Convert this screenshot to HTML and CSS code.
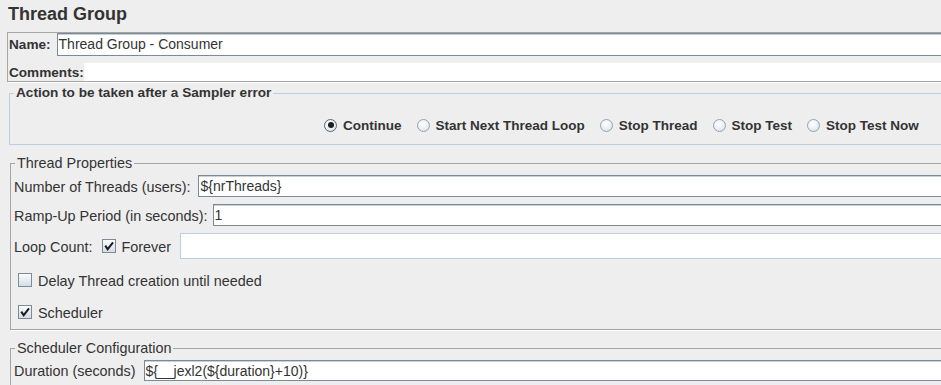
FILE: index.html
```html
<!DOCTYPE html>
<html lang="en">
<head>
<meta charset="utf-8">
<title>Thread Group</title>
<link rel="stylesheet" href="styles.css">
</head>
<body>
<h1 class="title">Thread Group</h1>

<div class="namebox">
  <div class="row name-row">
    <span class="lbl-b">Name:</span>
    <div class="field h23">Thread Group - Consumer</div>
  </div>
  <div class="row comments-row">
    <span class="lbl-b">Comments:</span>
    <div class="area"></div>
  </div>
</div>

<fieldset class="group action">
  <legend class="legend-b">Action to be taken after a Sampler error</legend>
  <div class="radios">
    <span class="radio-item"><span class="rb on"><span class="dot"></span></span><span class="rlabel">Continue</span></span>
    <span class="radio-item"><span class="rb"></span><span class="rlabel">Start Next Thread Loop</span></span>
    <span class="radio-item"><span class="rb"></span><span class="rlabel">Stop Thread</span></span>
    <span class="radio-item"><span class="rb"></span><span class="rlabel">Stop Test</span></span>
    <span class="radio-item"><span class="rb"></span><span class="rlabel">Stop Test Now</span></span>
  </div>
</fieldset>

<fieldset class="group etched props">
  <legend>Thread Properties</legend>
  <div class="gbody">
    <div class="prow h22">
      <span class="lbl wide">Number of Threads (users):</span>
      <div class="field fill">${nrThreads}</div>
    </div>
    <div class="prow h22">
      <span class="lbl">Ramp-Up Period (in seconds):</span>
      <div class="field fill">1</div>
    </div>
    <div class="prow h26">
      <span class="lbl">Loop Count:</span>
      <span class="cb cb-forever"><svg viewBox="0 0 12 12" width="12" height="12"><path d="M2.8 6.4 L4.7 9.2 L9.4 3.2" fill="none" stroke="#1e1e1e" stroke-width="2" stroke-linecap="square"/></svg></span>
      <span class="lbl forever">Forever</span>
      <div class="field fill disabled"></div>
    </div>
    <div class="prow h28">
      <span class="cb cb-indent"></span>
      <span class="lbl">Delay Thread creation until needed</span>
    </div>
    <div class="prow h22">
      <span class="cb cb-indent"><svg viewBox="0 0 12 12" width="12" height="12"><path d="M2.8 6.4 L4.7 9.2 L9.4 3.2" fill="none" stroke="#1e1e1e" stroke-width="2" stroke-linecap="square"/></svg></span>
      <span class="lbl">Scheduler</span>
    </div>
  </div>
</fieldset>

<fieldset class="group etched sched">
  <legend>Scheduler Configuration</legend>
  <div class="gbody">
    <div class="prow h21">
      <span class="lbl wide">Duration (seconds)</span>
      <div class="field fill">${__jexl2(${duration}+10)}</div>
    </div>
  </div>
</fieldset>
</body>
</html>
```
FILE: styles.css
```css
html, body {
  margin: 0;
  padding: 0;
}
body {
  width: 941px;
  height: 385px;
  overflow: hidden;
  background: #eeeeee;
  font-family: "Liberation Sans", Arial, sans-serif;
  color: #333333;
}

.title {
  margin: 0;
  padding: 4px 0 0 8px;
  font-size: 18px;
  font-weight: bold;
  line-height: 21px;
  color: #333333;
}

.namebox {
  margin: 7px -20px 0 7px;
  border: 1px solid #a5a5a5;
  box-shadow: 1px 1px 0 #ffffff;
}

.row {
  display: flex;
  align-items: center;
}
.name-row {
  gap: 6px;
  height: 23px;
}
.comments-row {
  margin-top: 7px;
  height: 18px;
}
.lbl-b {
  font-weight: bold;
  font-size: 13.6px;
  padding-left: 1px;
  white-space: nowrap;
}
.area {
  flex: 1;
  align-self: stretch;
  background: #ffffff;
}

.field {
  flex: 1;
  box-sizing: border-box;
  background: #ffffff;
  border: 1px solid #7a8a99;
  border-right: none;
  font-size: 14px;
  line-height: 20px;
  padding-left: 1px;
  color: #333333;
  white-space: nowrap;
  box-shadow: inset 0 1px 0 #c8d0d8;
}
.h23 { height: 23px; }
.fill { align-self: stretch; }
.field.disabled {
  border-color: #b8cfe5;
  box-shadow: none;
}

.group {
  margin: 0 -20px 0 9px;
  padding: 0;
  min-width: 0;
}
.group legend {
  padding: 0 2px;
  margin-left: 4px;
  line-height: 16px;
  font-size: 14.4px;
  color: #333333;
}
.group legend.legend-b {
  font-weight: bold;
  font-size: 13.6px;
}

.action {
  margin-top: 3px;
  border: 1px solid #b8cfe5;
}
.radios {
  display: flex;
  align-items: center;
  gap: 15px;
  padding: 16px 0 11px 314px;
  height: 16px;
}
.radio-item {
  display: flex;
  align-items: center;
  gap: 6px;
}
.rlabel {
  font-weight: bold;
  font-size: 13.5px;
  white-space: nowrap;
}
.rb {
  width: 13px;
  height: 13px;
  box-sizing: border-box;
  border-radius: 50%;
  border: 1px solid #96a3b0;
  background: radial-gradient(circle at 40% 35%, #ffffff 0%, #eef2f6 45%, #cfd9e3 100%);
  display: flex;
  align-items: center;
  justify-content: center;
  flex: none;
}
.rb.on {
  border-color: #5d6670;
}
.dot {
  width: 6px;
  height: 6px;
  border-radius: 50%;
  background: #1e1e1e;
}

.etched {
  border: 1px solid #a5a5a5;
  box-shadow: 1px 1px 0 #ffffff;
  margin-left: 10px;
}
.props { margin-top: 10px; }
.sched { margin-top: 10px; }

.gbody {
  display: flex;
  flex-direction: column;
  gap: 7px;
  padding: 4px 0 6px 2px;
}
.prow {
  display: flex;
  align-items: center;
}
.h21 { height: 21px; }
.h22 { height: 22px; }
.h26 { height: 26px; }
.h28 { height: 28px; }

.lbl {
  font-size: 14.4px;
  white-space: nowrap;
  padding-top: 1px;
  margin-right: 5px;
}
.lbl.wide { margin-right: 8px; }
.prow .lbl:first-child { padding-left: 1px; }
.lbl.forever { margin-right: 9px; }

.cb {
  width: 14px;
  height: 14px;
  box-sizing: border-box;
  border: 1px solid #7d8b99;
  background: linear-gradient(#fbfcfd, #d3dde7);
  display: flex;
  align-items: center;
  justify-content: center;
  flex: none;
  margin-right: 5px;
}
.cb-forever { margin-left: 5px; }
.cb-indent { margin-left: 5px; margin-right: 6px; }
```
